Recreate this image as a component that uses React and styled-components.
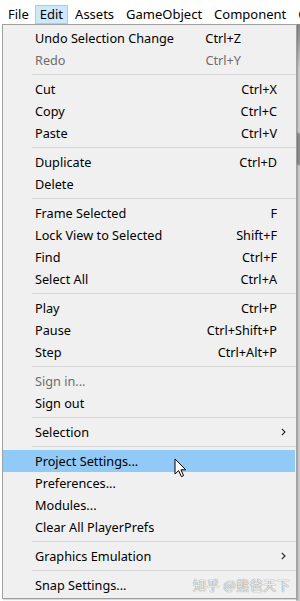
import React from "react";
import styled, { createGlobalStyle } from "styled-components";

const GlobalStyle = createGlobalStyle`
  html, body {
    margin: 0;
    padding: 0;
    background: #ffffff;
  }
  body {
    font-family: "Noto Sans", "Noto Sans CJK SC", "Liberation Sans", sans-serif;
    font-size: 12.7px;
    color: #000;
  }
`;

const menubarItems = ["File", "Edit", "Assets", "GameObject", "Component", "C"];

const editMenu = [
  [
    { label: "Undo Selection Change", shortcut: "Ctrl+Z", inset: true },
    { label: "Redo", shortcut: "Ctrl+Y", inset: true, disabled: true },
  ],
  [
    { label: "Cut", shortcut: "Ctrl+X" },
    { label: "Copy", shortcut: "Ctrl+C" },
    { label: "Paste", shortcut: "Ctrl+V" },
  ],
  [
    { label: "Duplicate", shortcut: "Ctrl+D" },
    { label: "Delete" },
  ],
  [
    { label: "Frame Selected", shortcut: "F" },
    { label: "Lock View to Selected", shortcut: "Shift+F" },
    { label: "Find", shortcut: "Ctrl+F" },
    { label: "Select All", shortcut: "Ctrl+A" },
  ],
  [
    { label: "Play", shortcut: "Ctrl+P" },
    { label: "Pause", shortcut: "Ctrl+Shift+P" },
    { label: "Step", shortcut: "Ctrl+Alt+P" },
  ],
  [
    { label: "Sign in...", disabled: true },
    { label: "Sign out" },
  ],
  [{ label: "Selection", submenu: true }],
  [
    { label: "Project Settings...", active: true },
    { label: "Preferences..." },
    { label: "Modules..." },
    { label: "Clear All PlayerPrefs" },
  ],
  [{ label: "Graphics Emulation", submenu: true }],
  [{ label: "Snap Settings..." }],
];

const Screen = styled.div`
  position: relative;
  width: 300px;
  height: 601px;
  overflow: hidden;
  background: #ffffff;
`;

const TitleStrip = styled.div`
  height: 5px;
`;

const MenuBar = styled.div`
  display: flex;
  align-items: center;
  height: 19px;
  padding-left: 2px;
  font-size: 13px;
  white-space: nowrap;
`;

const MenuBarItem = styled.div`
  height: 17px;
  line-height: 16px;
  padding: 0 ${(p) => (p.$open ? "4px" : "5px")};
  margin-right: ${(p) => (p.$open ? "1px" : "0")};
  border: 1px solid ${(p) => (p.$open ? "#99d1ff" : "transparent")};
  background: ${(p) => (p.$open ? "#cce8ff" : "transparent")};
`;

const Workspace = styled.div`
  display: flex;
  justify-content: flex-end;
  height: 577px;
`;

const SideStrip = styled.div`
  width: 4px;
  background: linear-gradient(
    to bottom,
    #8a8a8a 0px,
    #9a9a9a 14px,
    #c8c8c8 45px,
    #c8c8c8 108px,
    #8e8e8e 110px,
    #8e8e8e 140px,
    #c8c8c8 142px,
    #c8c8c8 100%
  );
`;

const Dropdown = styled.div`
  position: absolute;
  left: 2px;
  top: 24px;
  width: 293px;
  padding: 2px 0;
  background: #f0f0f0;
  border: 1px solid #a0a0a0;
  box-shadow: 1px 1px 1px rgba(0, 0, 0, 0.15);
`;

const Separator = styled.div`
  height: 1px;
  margin: 3px 0 3px 29px;
  background: #d7d7d7;
`;

const Row = styled.div`
  display: flex;
  align-items: center;
  height: 22px;
  margin-right: 1px;
  padding-left: 32px;
  padding-right: ${(p) => p.$right}px;
  background: ${(p) => (p.$active ? "#91c9f7" : "transparent")};
  color: ${(p) => (p.$disabled ? "#6d6d6d" : "#000")};
  white-space: nowrap;
`;

const Label = styled.span`
  flex: 1;
`;

const Shortcut = styled.span`
  text-align: right;
`;

const Chevron = styled.svg`
  display: block;
`;

const Watermark = styled.div`
  position: absolute;
  left: 193px;
  top: 575px;
  font-family: "Noto Sans CJK SC", "Noto Sans", sans-serif;
  font-size: 13px;
  color: rgba(255, 255, 255, 0.85);
  text-shadow: 0 0 1px #8a8a8a, 0 0 1px #8a8a8a;
  letter-spacing: 0.5px;
`;

const Pointer = styled.svg`
  position: absolute;
  left: 174px;
  top: 458px;
`;

function MenuRow({ item }) {
  const right = item.submenu ? 9 : item.inset ? 54 : 18;
  return (
    <Row $active={item.active} $disabled={item.disabled} $right={right}>
      <Label>{item.label}</Label>
      {item.shortcut && <Shortcut>{item.shortcut}</Shortcut>}
      {item.submenu && (
        <Chevron width="5" height="8" viewBox="0 0 5 8">
          <path d="M0.8 0.8 L4 4 L0.8 7.2" fill="none" stroke="#222" strokeWidth="1.1" />
        </Chevron>
      )}
    </Row>
  );
}

export default function App() {
  return (
    <Screen>
      <GlobalStyle />
      <TitleStrip />
      <MenuBar>
        {menubarItems.map((name) => (
          <MenuBarItem key={name} $open={name === "Edit"}>
            {name}
          </MenuBarItem>
        ))}
      </MenuBar>
      <Workspace>
        <SideStrip />
      </Workspace>

      <Dropdown>
        {editMenu.map((group, gi) => (
          <React.Fragment key={gi}>
            {gi > 0 && <Separator />}
            {group.map((item) => (
              <MenuRow key={item.label} item={item} />
            ))}
          </React.Fragment>
        ))}
      </Dropdown>

      <Pointer width="14" height="20" viewBox="0 0 14 20">
        <path
          d="M1 1 L1 16 L4.6 12.6 L7.4 18.6 L9.6 17.6 L6.9 11.8 L11.8 11.8 Z"
          fill="#fff"
          stroke="#000"
          strokeWidth="1"
          strokeLinejoin="round"
        />
      </Pointer>

      <Watermark>知乎 @熊爸天下</Watermark>
    </Screen>
  );
}
